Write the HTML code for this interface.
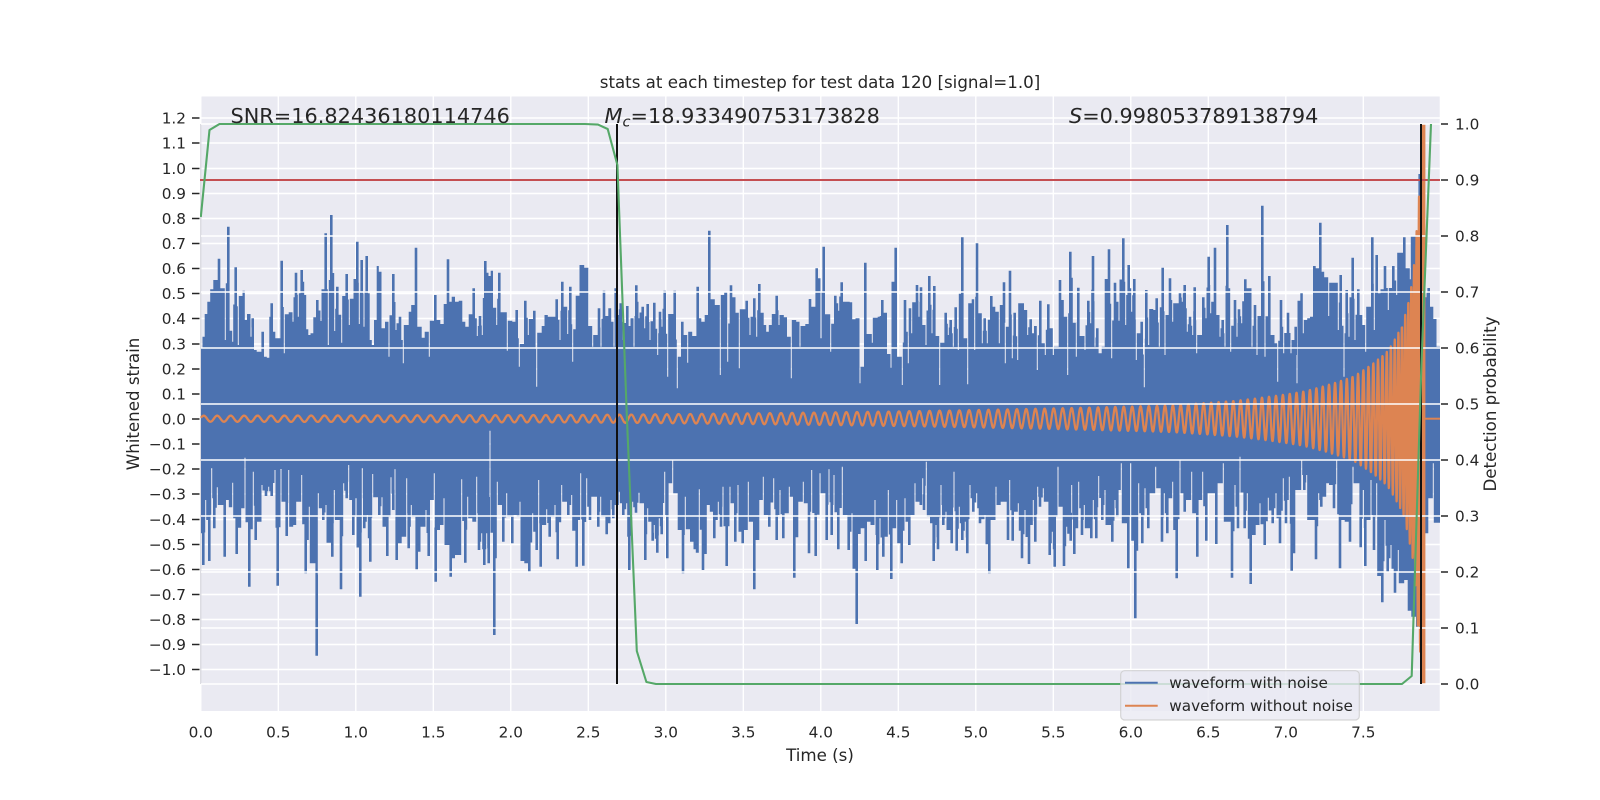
<!DOCTYPE html>
<html lang="en">
<head>
<meta charset="utf-8">
<title>stats at each timestep</title>
<style>
html,body{margin:0;padding:0;background:#fff;width:1600px;height:800px;overflow:hidden}
svg{display:block;font-family:"DejaVu Sans","Liberation Sans",sans-serif}
text{fill:#262626}
.t{font-size:15.28px}
.l{font-size:16.67px}
.a{font-size:20.83px}
</style>
</head>
<body>
<svg id="s" width="1600" height="800" viewBox="0 0 1600 800" xmlns="http://www.w3.org/2000/svg">
<defs><clipPath id="c"><rect x="200" y="96" width="1240" height="615.5"/></clipPath></defs>
<rect x="201" y="96.5" width="1238.7" height="614.5" fill="#eaeaf2"/>
<g id="g1" stroke="#fff" stroke-width="1.4" fill="none"></g>
<rect x="200" y="124" width="1.5" height="560" fill="#dcdce2"/>
<g clip-path="url(#c)">
<rect x="201" y="392" width="1238" height="36" fill="#4c72b0"/>
<path id="blue" fill="#4c72b0" stroke="none"/>
<path id="orange" fill="none" stroke="#dd8452" stroke-width="2.3" stroke-linejoin="round"/>
<path d="M1423.6 124V684" fill="none" stroke="#dd8452" stroke-width="3.6"/>
<path d="M1424 418.7H1440" fill="none" stroke="#dd8452" stroke-width="2"/>
</g>
<g id="g2" stroke="#fff" stroke-width="1.4" fill="none"></g>
<g clip-path="url(#c)">
<path d="M200 180H1440" stroke="#c44e52" stroke-width="2" fill="none"/>
<path d="M617 124V684M1421 124V684" stroke="#111" stroke-width="2" fill="none"/>
<path d="M200.8 217L209.5 130L219.5 124L585 124L598 124.6L607.7 129L617.4 165L627 420L636.8 651L646.4 682L656 684L1402 684L1411.7 676L1421.4 365L1431 124" fill="none" stroke="#55a868" stroke-width="2.1" stroke-linejoin="round"/>
</g>
<g id="ticks" stroke="#262626" stroke-width="1.6" fill="none"></g>
<g id="labels"></g>
<text class="l" x="820" y="88" text-anchor="middle">stats at each timestep for test data 120 [signal=1.0]</text>
<text class="l" x="820" y="761" text-anchor="middle">Time (s)</text>
<text class="l" transform="translate(139 404) rotate(-90)" text-anchor="middle">Whitened strain</text>
<text class="l" transform="translate(1496 404) rotate(-90)" text-anchor="middle">Detection probability</text>
<text class="a" x="230.5" y="123">SNR=16.82436180114746</text>
<text class="a" x="604.5" y="123"><tspan font-style="italic">M</tspan><tspan font-style="italic" font-size="14.6" dy="3.5">c</tspan><tspan dy="-3.5">=18.933490753173828</tspan></text>
<text class="a" x="1069" y="123"><tspan font-style="italic">S</tspan>=0.998053789138794</text>
<rect x="1120.7" y="670.7" width="238.6" height="49.3" rx="4" fill="#eaeaf2" fill-opacity=".8" stroke="#cccccc" stroke-opacity=".8" stroke-width="1.2"/>
<path d="M1125 682.7H1157.7" stroke="#4c72b0" stroke-width="2"/>
<path d="M1125 705.7H1157.7" stroke="#dd8452" stroke-width="2"/>
<text class="t" x="1169.3" y="688">waveform with noise</text>
<text class="t" x="1169.3" y="711">waveform without noise</text>
</svg>
<script>
(function(){
var NS="http://www.w3.org/2000/svg";
function el(p,n,a,tx){var e=document.createElementNS(NS,n);for(var k in a)e.setAttribute(k,a[k]);if(tx)e.textContent=tx;p.appendChild(e);return e}
var g1=document.getElementById('g1'),g2=document.getElementById('g2'),tk=document.getElementById('ticks'),lb=document.getElementById('labels');
var d1='',d2='',dt='',i;
for(i=-10;i<=12;i++){var y=Math.round((419-25.07*i)*2)/2;d1+='M201 '+y+'H1440';dt+='M192 '+y+'H199.5';
 var tx=(i<0?'\u2212':'')+(Math.abs(i)/10).toFixed(1);el(lb,'text',{'class':'t',x:186,y:y+5.5,'text-anchor':'end'},tx)}
for(i=0;i<=15;i++){var x=200.8+77.5*i;d1+='M'+x.toFixed(1)+' 96V711';el(lb,'text',{'class':'t',x:x,y:737.3,'text-anchor':'middle'},(i/2).toFixed(1))}
for(i=0;i<=10;i++){var y2=684-56*i;d2+='M201 '+y2+'H1440';dt+='M1441 '+y2+'H1448';el(lb,'text',{'class':'t',x:1455,y:y2+5.5},(i/10).toFixed(1))}
el(g1,'path',{d:d1});el(g2,'path',{d:d2});el(tk,'path',{d:dt});

function P(s,ox,oy){return s.trim().split(/\s+/).map(function(p){var a=p.split(',');return [ox+a[0]/3,oy+a[1]/3]})}
var T=[].concat(
P("35,445 40,410 48,342 56,305 65,268 75,240 87,176 100,265 106,420 115,80 122,392 128,425 137,202 145,435 153,288 162,272 167,360 175,342 183,410 188,355 195,450 205,455 218,395 228,470 233,473 243,350 245,310 252,395 260,415 275,182 283,460 292,343 300,337 309,365 318,218 325,350 335,210 340,245 345,285 352,388 358,405 365,400 375,352 382,300 393,363 402,268 407,100 415,435 424,45 434,393 442,260 455,428 467,288 470,222 478,375 486,296 495,237 502,125 508,372 515,180 522,380 530,168 535,280 543,420 548,435 556,360 564,198 569,215 580,385 590,365 597,470 610,222 618,390 630,350 640,490 652,375 660,335 667,315 678,143 690,380 700,413 708,395 718,470 727,362 736,285 745,360 757,372 765,312 774,178 780,305 790,290 800,305 812,302 822,365 830,380 842,343 851,265 857,355 862,408 870,348 877,405 886,183 892,218 899,228 905,212 913,323 920,375 928,218 938,337 945,337 952,452 962,362 972,365 980,330 988,500 996,432 1006,302 1015,405 1025,357 1033,332 1040,560 1050,398 1060,378 1067,345 1080,350 1100,298 1110,420 1117,245 1125,320 1133,402 1141,260 1148,485 1152,388 1162,287 1175,195 1190,203",190,200),
P("0,378 8,440 18,405 27,325 33,440 42,272 50,348 60,325 67,365 72,440 77,265 85,345 92,310 100,420 112,318 118,378 125,355 132,440 139,256 147,355 158,320 164,385 173,312 180,420 193,308 203,465 210,335 216,380 224,272 233,530 241,342 254,272 262,565 268,470 277,365 285,405 293,488 301,395 312,408 323,260 330,355 338,365 350,345 358,92 369,298 380,315 391,525 400,285 405,275 413,485 423,256 433,292 440,338 448,505 456,328 470,302 480,405 493,295 500,410 508,252 517,338 525,375 532,395 541,375 550,342 560,287 567,375 578,345 585,352 597,410 604,535 615,360 622,365 630,440 640,378 652,372 660,297 668,320 680,205 686,235 693,415 701,140 712,343 722,455 736,287 746,332 755,247 765,305 775,305 783,307 790,358 803,355 810,550 815,500 826,188 835,402 847,428 858,353 868,350",590,200),
P("0,348 7,300 17,338 25,462 33,503 40,245 47,143 57,470 67,555 75,300 85,490 90,325 95,400 103,307 111,255 117,350 123,262 130,375 138,435 148,228 156,400 163,258 172,408 179,555 187,428 197,338 205,405 212,360 220,440 227,322 235,450 247,112 255,415 263,553 272,310 278,298 284,450 291,130 300,340 307,430 314,355 322,430 334,288 342,320 350,335 358,430 363,315 372,247 376,490 382,380 390,212 397,475 404,338 413,480 428,310 436,330 443,405 452,358 458,400 466,378 472,510 481,302 490,430 496,465 505,313 514,385 520,465 527,440 540,240 546,300 557,350 563,525 571,155 575,233 582,368 589,470 595,263 605,408 615,450 625,302 632,370 639,168 645,440 652,385 660,460 670,440 678,237 687,148 695,475 705,248 717,362 730,115 737,375 746,195 755,335 763,237 769,480 775,400 785,365 793,562 799,270 806,435 815,327 825,330 830,295 838,440 848,203 855,465 865,345",880,200),
P("0,235 8,365 18,310 30,280 37,305 44,255 52,395 60,350 68,405 74,262 80,460 90,405 100,292 108,355 116,170 122,340 130,305 135,143 143,345 150,410 158,360 165,440 172,75 182,455 195,300 201,410 207,328 215,370 226,238 238,265 246,440 255,315 261,465 268,348 277,17 285,470 298,228 309,405 318,430 323,545 333,300 341,460 354,338 363,460 377,380 381,550 388,302 394,280 400,400 408,360 415,355 425,350 433,198 441,205 451,68 459,215 466,232 476,348 485,248 497,248 505,390 512,225 522,530 530,270 537,410 548,173 555,420 565,268 574,345 580,375 587,455 596,320 607,112 613,390 620,165 628,280 635,268 645,198 655,330 670,198 680,285 691,158 703,112 711,205 721,238 730,108 743,130 749,-78 756,105 768,292 776,264 785,320 795,357 804,440",1170,200));
var B=[].concat(
P("35,400 40,495 47,300 55,360 58,483 65,205 73,385 82,262 93,315 104,470 113,300 120,322 128,248 140,462 150,383 157,325 165,173 178,560 190,215 197,420 207,365 216,255 228,288 236,260 245,288 255,210 263,557 273,207 280,305 290,408 296,210 304,380 315,375 322,305 335,225 347,520 358,320 372,490 380,767 385,280 392,325 400,360 408,315 416,428 427,470 433,270 441,360 453,568 461,250 470,295 476,195 490,405 498,295 511,590 517,205 523,385 532,345 541,485 548,222 557,292 568,345 576,292 592,468 603,232 610,330 615,208 620,480 630,430 640,410 650,235 656,445 664,315 672,350 680,508 688,455 695,380 708,330 716,468 725,300 733,220 737,545 745,390 755,375 762,295 772,435 782,530 790,475 800,465 815,238 826,488 833,290 842,355 852,365 860,230 867,450 875,400 883,495 890,400 896,490 900,92 913,705 922,245 930,315 940,425 950,280 958,350 967,430 975,345 985,350 990,305 998,483 1008,490 1018,515 1028,340 1040,450 1046,240 1052,500 1060,375 1070,328 1079,410 1085,350 1095,315 1103,478 1115,255 1125,305 1135,345 1145,285 1160,500 1172,220 1180,497 1190,235 1197,320",190,400),
P("0,960 8,890 18,890 25,980 32,890 42,950 50,1003 57,970 63,900 70,955 77,915 88,875 100,945 110,910 118,1110 128,905 138,938 147,878 158,910 166,1080 173,925 180,965 188,1022 193,975 202,1058 208,955 215,1003 224,815 232,1075 240,850 248,780 258,880 268,990 279,1120 286,890 294,988 306,1025 315,1048 320,1058 328,868 339,1110 346,1062 355,915 364,935 373,1015 385,905 393,980 399,860 410,1098 420,860 428,910 436,1025 444,855 452,995 458,1030 468,990 475,845 482,965 493,1168 503,1020 513,900 520,830 530,945 538,980 551,835 560,1020 570,870 580,1015 590,940 598,860 606,890 613,1133 620,1012 630,905 640,845 650,910 657,1060 665,810 677,1068 690,820 700,880 710,1020 717,808 725,1005 732,825 745,1048 757,800 765,945 776,1050 786,940 800,1272 808,1002 816,985 827,1083 835,965 848,975 855,900 862,1110",590,200),
P("0,955 10,1070 18,1010 25,870 34,1137 42,985 50,900 57,1030 65,1090 75,895 88,1035 97,945 105,850 115,905 122,915 128,835 132,930 139,785 147,950 153,970 161,1083 168,975 174,1048 183,855 190,975 198,935 207,990 215,1030 222,815 230,1052 238,920 247,1020 256,965 262,1060 270,855 280,935 290,880 300,970 315,945 328,1120 335,960 348,860 356,915 368,905 384,1020 389,840 398,1022 405,935 415,910 426,1075 435,930 447,1092 455,975 460,900 466,1025 473,860 480,920 490,865 500,905 509,1065 517,995 524,1100 534,800 542,920 552,1098 560,980 572,1022 575,855 583,1062 590,985 596,845 606,1005 613,915 620,985 634,1015 640,900 649,1015 656,828 667,960 675,870 684,975 697,1025 705,900 712,950 724,790 735,970 745,1105 752,790 766,1255 776,850 787,1030 795,865 805,985 817,880 827,800 835,865 846,1025 853,880 862,1000",880,200),
P("0,895 8,845 20,1135 30,780 35,880 44,935 52,900 65,815 72,940 82,1070 90,900 98,815 109,1022 119,880 130,880 139,1032 148,850 160,790 175,965 186,1133 195,855 204,985 210,770 224,985 232,880 242,1152 252,1005 262,975 270,910 284,1035 295,893 308,970 318,880 330,1030 340,835 348,970 358,830 365,1112 372,1060 380,870 395,780 403,870 410,825 425,960 438,1078 446,880 454,920 465,890 472,850 482,855 492,925 500,780 510,1105 520,960 528,965 540,1025 549,800 560,850 572,1042 580,870 586,1098 596,960 603,840 612,1050 620,850 629,1128 637,1207 645,960 653,1115 663,1035 675,1178 685,1050 697,1150 708,1140 718,1232 730,1250 742,1280 754,1200 770,1000 780,895 790,790 803,968",1170,200));
// sgn = -1 for top profile (outward is smaller y), +1 for bottom profile
function steps(a,sgn,rev){
 var n=a.length,j,hw=[],TH=8;
 for(j=0;j<n;j++){
  var yc=a[j][1]*sgn,yp=j?a[j-1][1]*sgn:yc,yn=j<n-1?a[j+1][1]*sgn:yc;
  if(yc>yp+TH&&yc>yn+TH)hw[j]=1.3;
  else if(yc<yp-TH&&yc<yn-TH)hw[j]=0.5;
  else hw[j]=0;
 }
 var o=[];
 for(j=0;j<n;j++){
  var l,r;
  if(j===0)l=201;
  else if(hw[j])l=Math.max(a[j][0]-hw[j],(a[j-1][0]+a[j][0])/2-2);
  else if(hw[j-1])l=a[j-1][0]+hw[j-1];
  else l=(a[j-1][0]+a[j][0])/2;
  if(j===n-1)r=1440;
  else if(hw[j])r=Math.min(a[j][0]+hw[j],(a[j][0]+a[j+1][0])/2+2);
  else if(hw[j+1])r=a[j+1][0]-hw[j+1];
  else r=(a[j][0]+a[j+1][0])/2;
  if(r<l)r=l;
  o.push(l.toFixed(1)+' '+a[j][1].toFixed(1));
  o.push(r.toFixed(1)+' '+a[j][1].toFixed(1));
  if(j<n-1&&hw[j]&&hw[j+1]){
   var ya=((a[j][1]+a[j+1][1])/2).toFixed(1);
   o.push(r.toFixed(1)+' '+ya);
   o.push((a[j+1][0]-hw[j+1]).toFixed(1)+' '+ya);
  }
 }
 if(rev)o.reverse();
 return o;
}
document.getElementById('blue').setAttribute('d','M'+steps(T,-1,false).concat(steps(B,1,true)).join('L')+'Z');

function lerp(tb,v,lg){for(var j=0;j<tb.length-1;j++){if(v<=tb[j+1][0]){var f=(v-tb[j][0])/(tb[j+1][0]-tb[j][0]);
  return lg?Math.exp(Math.log(tb[j][1])*(1-f)+Math.log(tb[j+1][1])*f):tb[j][1]*(1-f)+tb[j+1][1]*f}}return tb[tb.length-1][1]}
var AT=[[0,265],[2,265],[6,210],[11,142],[21,95],[37,67],[71,42],[121,27],[187,18],[254,13.3],[544,7],[834,3.8],[1224,3],[1300,3]];
var PT=[[0,2],[15,3],[37,4.2],[70,5.6],[120,6.7],[250,7.8],[280,8.3],[400,9.3],[560,10.6],[800,12],[1000,13.2],[1224,13.5],[1300,13.5]];
var tc=1424,ph=0,st=0.2,pts=[],xx,ref=0;
for(xx=201;xx<tc;xx+=st){ph+=2*Math.PI*st/lerp(PT,tc-xx,false);pts.push([xx,ph]);if(Math.abs(xx-1165)<st/2+.001)ref=ph}
var off=Math.PI/2-ref,d=[];
for(i=0;i<pts.length;i++){var tau=tc-pts[i][0];var a=lerp(AT,tau,true);
 d.push(pts[i][0].toFixed(1)+' '+(418.7-a*Math.sin(pts[i][1]+off)).toFixed(1))}
document.getElementById('orange').setAttribute('d','M'+d.join('L'));
})();
</script>
</body>
</html>
